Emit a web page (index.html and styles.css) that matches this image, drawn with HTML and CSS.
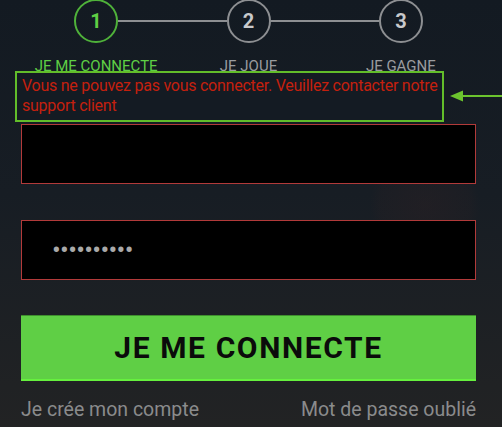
FILE: index.html
```html
<!DOCTYPE html>
<html lang="fr">
<head>
    <meta charset="UTF-8">
    <meta name="viewport" content="width=device-width, initial-scale=1.0">
    <title>Connexion</title>
    <link rel="stylesheet" href="styles.css">
</head>
<body>
    <div class="login">
        <div class="steps">
            <div class="step-circle active">1</div>
            <div class="step-line"></div>
            <div class="step-circle">2</div>
            <div class="step-line"></div>
            <div class="step-circle">3</div>
        </div>
        <div class="step-labels">
            <div class="step-label active">JE ME CONNECTE</div>
            <div class="step-label">JE JOUE</div>
            <div class="step-label">JE GAGNE</div>
        </div>

        <div class="error-box">
            Vous ne pouvez pas vous connecter. Veuillez contacter notre<br>support client
        </div>
        <div class="error-arrow">
            <svg width="52" height="14" viewBox="0 0 52 14">
                <line x1="10" y1="7" x2="52" y2="7" stroke="#6cc42e" stroke-width="2"/>
                <polygon points="0,7 13,1.5 13,12.5" fill="#6cc42e"/>
            </svg>
        </div>

        <form class="login-form">
            <input class="field" type="text" value="">
            <input class="field field-pass" type="password" value="motdepasse">
            <button class="btn-login" type="button">JE ME CONNECTE</button>
        </form>

        <div class="links">
            <a href="#">Je crée mon compte</a>
            <a href="#">Mot de passe oublié</a>
        </div>
    </div>
</body>
</html>
```

FILE: styles.css
```css
html, body {
    height: 100%;
}
body {
    margin: 0;
    font-family: Roboto, 'Liberation Sans', sans-serif;
    background:
        radial-gradient(circle at 425px 205px, rgba(60,35,35,0.25) 0, rgba(60,35,35,0.12) 45px, rgba(0,0,0,0) 55px),
        linear-gradient(180deg, #131a22 0%, #171d24 45%, #222324 100%);
    overflow: hidden;
}
.login {
    position: relative;
    width: 455px;
    padding-left: 21px;
}
.steps {
    display: flex;
    align-items: center;
    margin: -1px 53px 0 53px;
}
.step-circle {
    width: 40px;
    height: 40px;
    border: 2px solid #8d8f92;
    border-radius: 50%;
    color: #c8c9cb;
    font-size: 20px;
    font-weight: 700;
    display: flex;
    align-items: center;
    justify-content: center;
}
.step-circle.active {
    border-color: #4fb23a;
    color: #5fcf45;
}
.step-line {
    flex: 1;
    height: 2px;
    background: #8d8f92;
}
.step-labels {
    display: grid;
    grid-template-columns: repeat(3, 1fr);
    margin: 14px -1px 0 -1px;
}
.step-label {
    text-align: center;
    font-size: 15px;
    color: #9a9c9f;
    line-height: 18px;
}
.step-label.active {
    color: #5fcf45;
}
.error-box {
    position: absolute;
    left: 15px;
    top: 72px;
    width: 420px;
    height: 43px;
    border: 2px solid #62bd2a;
    background: #141b23;
    color: #c4200e;
    font-size: 16px;
    letter-spacing: -0.25px;
    line-height: 20px;
    white-space: nowrap;
    padding: 3px 0 1px 5px;
}
.error-arrow {
    position: absolute;
    left: 450px;
    top: 90px;
    line-height: 0;
}
.login-form {
    display: flex;
    flex-direction: column;
    margin-top: 49px;
}
.field {
    box-sizing: border-box;
    height: 60px;
    margin: 0 0 36px 0;
    padding: 0 0 0 30px;
    border: 1px solid #b23a3a;
    background: #000;
    color: #a9a9a9;
    font-family: Roboto, sans-serif;
    font-size: 14px;
    outline: none;
}
.field-pass {
    font-size: 26px;
    letter-spacing: -0.7px;
}
.btn-login {
    height: 66px;
    border: 0;
    border-top: 1px solid #3f8f2e;
    border-bottom: 2px solid #66f03e;
    background: #5fcf45;
    color: #0b0b0b;
    font-family: Roboto, sans-serif;
    font-size: 30px;
    font-weight: 700;
    letter-spacing: 1.6px;
    padding: 0;
    margin-top: -1px;
}
.links {
    display: flex;
    justify-content: space-between;
    margin-top: 17px;
}
.links a {
    color: #8a8b8c;
    font-size: 19.5px;
    text-decoration: none;
}
```
